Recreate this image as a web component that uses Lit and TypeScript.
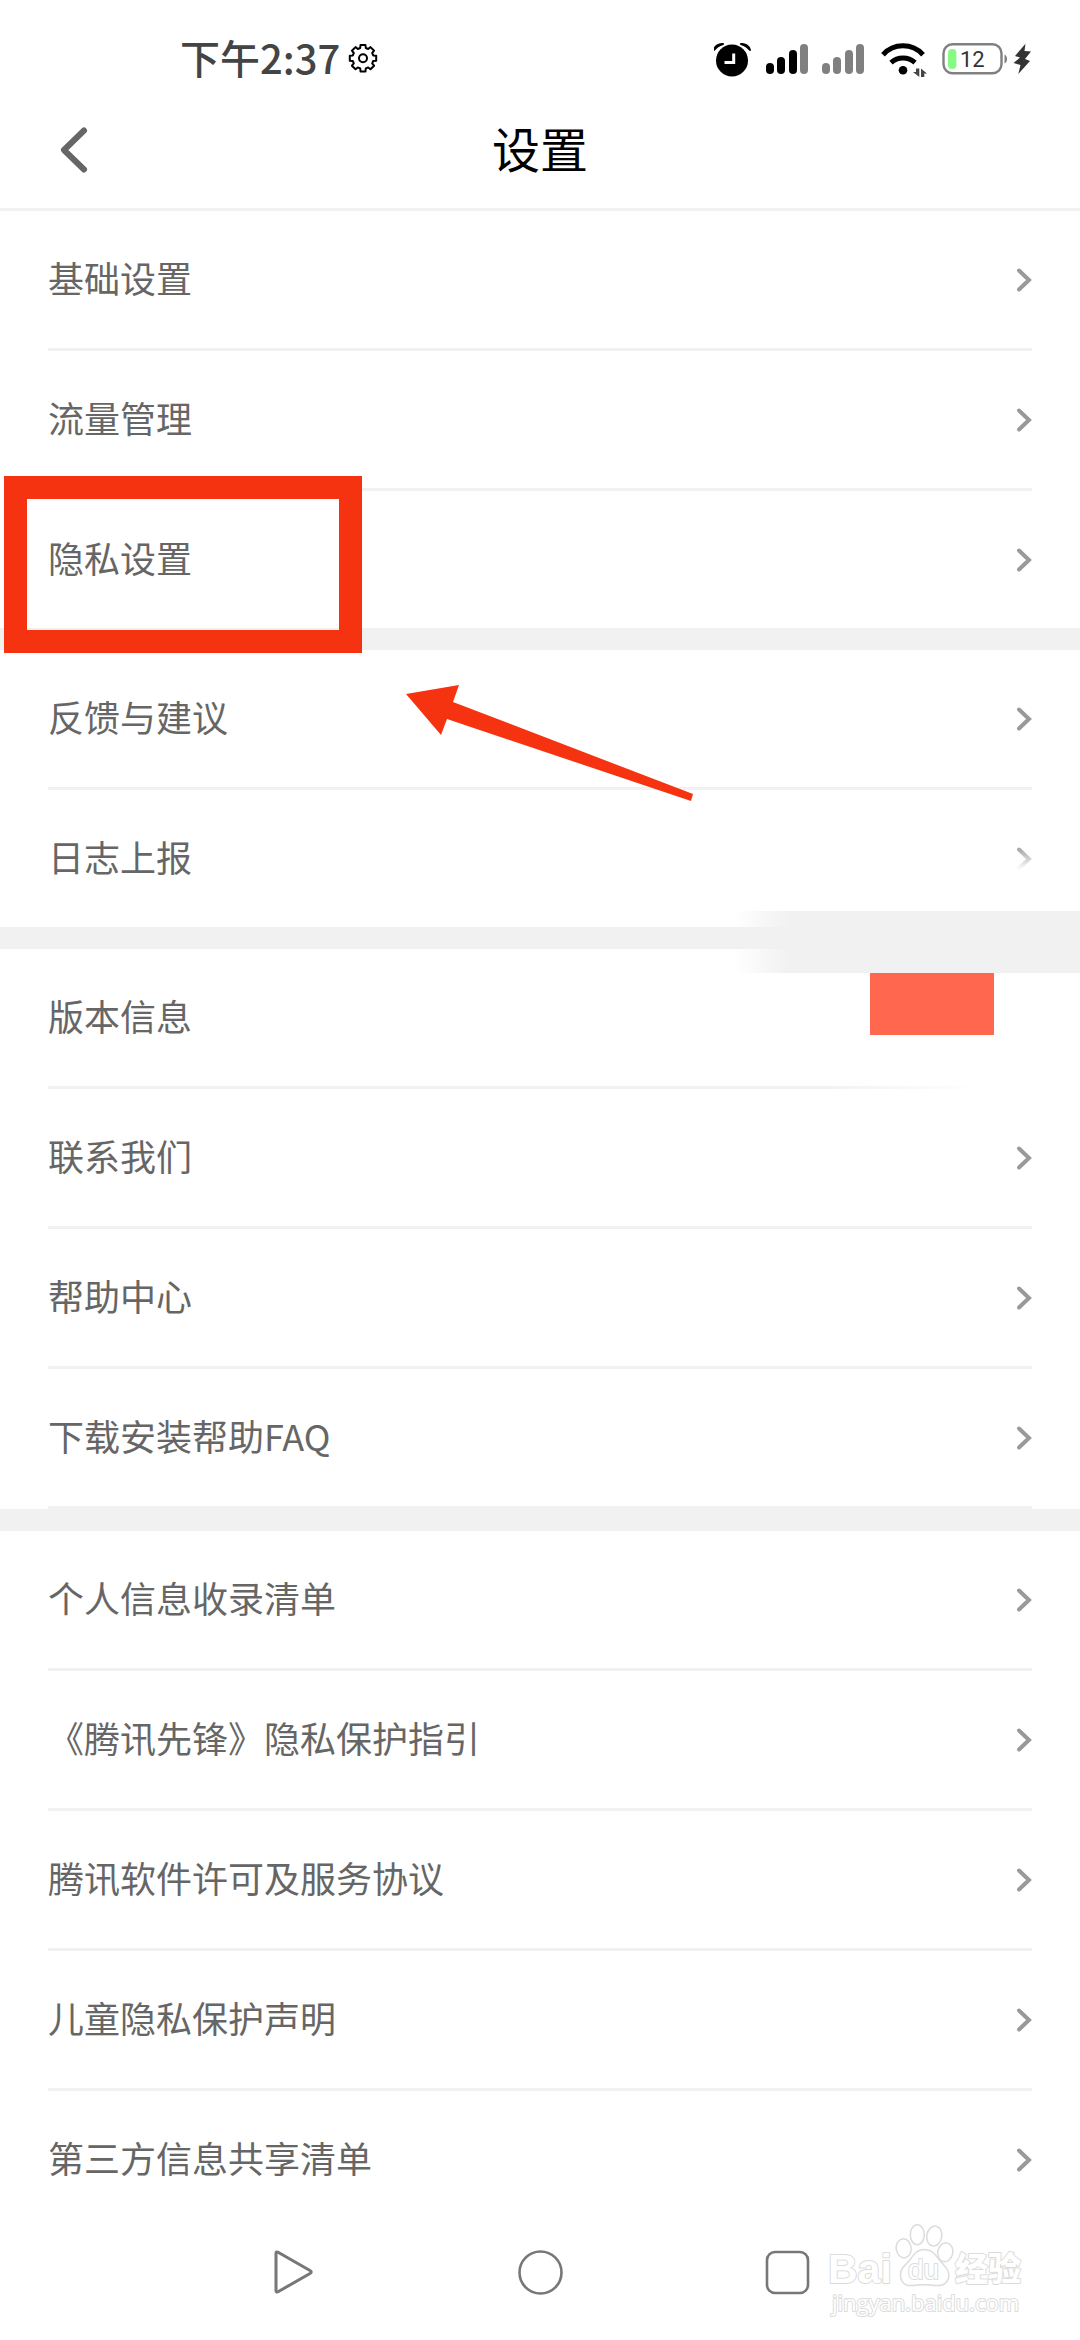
import { LitElement, html, svg, css, nothing } from "lit";
import { customElement, property } from "lit/decorators.js";

interface Item {
  label: string;
  chevron?: "none" | "faded";
  badge?: boolean;
  marked?: boolean;
}

interface Group {
  items: Item[];
  closed?: boolean;
}

const GROUPS: Group[] = [
  { items: [{ label: "基础设置" }, { label: "流量管理" }, { label: "隐私设置", marked: true }] },
  { items: [{ label: "反馈与建议" }, { label: "日志上报", chevron: "faded" }] },
  {
    items: [
      { label: "版本信息", chevron: "none", badge: true },
      { label: "联系我们" },
      { label: "帮助中心" },
      { label: "下载安装帮助FAQ" },
    ],
    closed: true,
  },
  {
    items: [
      { label: "个人信息收录清单" },
      { label: "《腾讯先锋》隐私保护指引" },
      { label: "腾讯软件许可及服务协议" },
      { label: "儿童隐私保护声明" },
      { label: "第三方信息共享清单" },
    ],
  },
];

/** Outline of a cog with eight rounded teeth. */
function gearPath(cx: number, cy: number, outer: number, inner: number): string {
  const pts: string[] = [];
  for (let i = 0; i < 8; i++) {
    const a = (i * Math.PI) / 4 - Math.PI / 2;
    for (const [d, r] of [[-0.27, inner], [-0.19, outer], [0.19, outer], [0.27, inner]]) {
      pts.push(`${(cx + r * Math.cos(a + d)).toFixed(1)} ${(cy + r * Math.sin(a + d)).toFixed(1)}`);
    }
  }
  return `M${pts.join("L")}Z`;
}

@customElement("status-bar")
export class StatusBar extends LitElement {
  static styles = css`
    :host {
      display: flex;
      justify-content: space-between;
      align-items: center;
      padding: 35px 48px 9px 180px;
      line-height: 44px;
    }
    .side,
    .power {
      display: flex;
      align-items: center;
    }
    .side {
      gap: 8px;
    }
    .icons {
      gap: 14px;
    }
    .power {
      gap: 6px;
    }
    .time {
      padding-bottom: 4px;
      font-size: 40px;
      font-weight: 500;
      color: #444;
    }
    svg {
      display: block;
    }
    .level {
      font-family: Roboto, "Noto Sans", sans-serif;
      font-size: 22px;
      fill: #333;
    }
  `;

  private signal(active: number) {
    const bars = [
      [0, 24],
      [11, 18],
      [23, 11],
      [34, 5],
    ];
    return html`<svg width="42" height="40" viewBox="0 0 42 40" aria-hidden="true">
      ${bars.map(
        ([x, y], i) =>
          svg`<rect x=${x} y=${y} width="8" height=${35 - y} rx="4" fill=${i < active ? "#000" : "#808080"} />`
      )}
    </svg>`;
  }

  render() {
    return html`
      <div class="side">
        <span class="time">下午2:37</span>
        <svg width="30" height="30" viewBox="0 0 30 30" fill="none" stroke="#000" stroke-width="2" stroke-linejoin="round" aria-hidden="true">
          <path d=${gearPath(15, 14.2, 13.4, 10.6)} />
          <circle cx="15" cy="14.200" r="4" />
        </svg>
      </div>
      <div class="side icons">
        <svg width="38" height="40" viewBox="0 0 38 40" aria-hidden="true">
          <path d="M0 11A8 8 0 0 1 9 5Q3 7 0 11ZM36 11A8 8 0 0 0 27 5Q33 7 36 11Z" stroke="#000" stroke-width="2" stroke-linejoin="round" />
          <circle cx="18" cy="21.500" r="16" />
          <path d="M19.700 14.500V23.500H10.500" fill="none" stroke="#fff" stroke-width="3" />
        </svg>
        ${this.signal(3)} ${this.signal(0)}
        <svg width="50" height="40" viewBox="-1 0 50 40" aria-hidden="true">
          <g fill="none" stroke="#000" stroke-width="5">
            <path d="M4 15.700A27 27 0 0 1 44 15.700" />
            <path d="M12 23.700A18 18 0 0 1 36 23.700" />
          </g>
          <circle cx="24" cy="31.300" r="4.300" />
          <g fill="#444">
            <path d="M37 29.500H40.300V38L34 33H37Z" />
            <path d="M42 38H45.300V34.500H48L42 29.500Z" />
          </g>
        </svg>
        <div class="power">
          <svg width="65" height="40" viewBox="0 0 65 40" aria-hidden="true">
            <rect x="1.500" y="5.300" width="58" height="29" rx="9" fill="none" stroke="#808080" stroke-width="2.400" />
            <path d="M62.500 15.500Q65 16.500 65 20T62.500 24.500Z" fill="#808080" />
            <rect x="6" y="10" width="8.400" height="20" rx="4" fill="#85fb85" />
            <text class="level" x="18" y="28">12</text>
          </svg>
          <svg width="19" height="40" viewBox="0 0 19 40" aria-hidden="true">
            <path d="M12.500 4.700L2 17L7 18.500L0.500 24L7.500 26L5.300 35L17 22L12 20L18 12.500L11.500 12Z" fill="#333" />
          </svg>
        </div>
      </div>
    `;
  }
}

@customElement("setting-row")
export class SettingRow extends LitElement {
  @property() label = "";
  @property() chevron = "";
  @property({ type: Boolean }) badge = false;
  @property({ type: Boolean }) marked = false;
  @property({ type: Boolean, reflect: true }) last = false;

  static styles = css`
    :host {
      display: block;
      position: relative;
      padding: 0 48px;
    }
    .row {
      display: flex;
      align-items: center;
      justify-content: space-between;
      width: 100%;
      padding: 42px 0;
      border: 0;
      background: none;
      font: inherit;
      font-size: 36px;
      line-height: 49px;
      color: #666;
      text-align: left;
    }
    .label {
      padding-bottom: 4px;
    }
    .line {
      height: 3px;
      background: #f1f1f1;
    }
    .line.fading {
      background: linear-gradient(to right, #f1f1f1 78%, #fff 95%);
    }
    :host([last]) .line {
      display: none;
    }
    svg {
      display: block;
    }
    .badge {
      position: absolute;
      top: 24px;
      right: 86px;
      width: 124px;
      height: 62px;
      background: #ff674f;
    }
    .mark {
      position: absolute;
      top: -15px;
      left: 4px;
      box-sizing: border-box;
      width: 358px;
      height: 177px;
      border: 23px solid #f53311;
      z-index: 2;
      pointer-events: none;
    }
  `;

  render() {
    const faded = this.chevron === "faded";
    return html`
      <button class="row" type="button">
        <span class="label">${this.label}</span>
        ${this.chevron === "none"
          ? nothing
          : html`<svg width="16" height="26" viewBox="0 0 16 26" aria-hidden="true">
              <defs>
                <linearGradient id="fade" x1="0" y1="0" x2="0" y2="1">
                  <stop offset="0" stop-color="#aaa" />
                  <stop offset="1" stop-color="#fafafa" />
                </linearGradient>
              </defs>
              <path
                d="M3 3.500L13 13L3 22.500"
                fill="none"
                stroke=${faded ? "url(#fade)" : "#999"}
                stroke-width="4"
                stroke-linecap="round"
              />
            </svg>`}
      </button>
      <div class="line ${this.badge ? "fading" : ""}"></div>
      ${this.badge ? html`<div class="badge"></div>` : nothing}
      ${this.marked ? html`<div class="mark"></div>` : nothing}
    `;
  }
}

@customElement("system-nav")
export class SystemNav extends LitElement {
  static styles = css`
    :host {
      display: flex;
      justify-content: space-between;
      position: relative;
      padding: 22px 25% 45px;
    }
    button {
      display: block;
      padding: 0;
      border: 0;
      background: none;
    }
    svg {
      display: block;
    }
    .brand {
      position: absolute;
      right: 54px;
      bottom: 20px;
    }
    .outlined {
      fill: #fff;
      stroke: #dcdcdc;
      stroke-width: 2px;
      paint-order: stroke;
      stroke-linejoin: round;
    }
    .latin {
      font-family: "Liberation Sans", sans-serif;
      font-weight: 700;
      font-size: 41px;
    }
    .small {
      font-family: "Liberation Sans", sans-serif;
      font-size: 28px;
      fill: #fff;
    }
    .han {
      font-family: "Noto Sans CJK SC", sans-serif;
      font-weight: 900;
      font-size: 33px;
    }
    .site {
      font-family: "Open Sans", sans-serif;
      font-size: 22px;
    }
  `;

  render() {
    return html`
      <button type="button" aria-label="返回">
        <svg width="45" height="45" viewBox="0 0 45 45" fill="none" stroke="#777" stroke-width="3" stroke-linejoin="round">
          <path d="M6 3.500Q6 1 8.500 2.500L40 20.500Q42.500 22 40 23.500L8.500 41.500Q6 43 6 40.500Z" />
        </svg>
      </button>
      <button type="button" aria-label="主屏幕">
        <svg width="45" height="45" viewBox="0 0 45 45" fill="none" stroke="#777" stroke-width="2.600">
          <circle cx="22.500" cy="22.500" r="21" />
        </svg>
      </button>
      <button type="button" aria-label="最近任务">
        <svg width="45" height="45" viewBox="0 0 45 45" fill="none" stroke="#777" stroke-width="2.600">
          <rect x="2" y="2" width="41" height="41" rx="8" />
        </svg>
      </button>
      <svg class="brand" width="198" height="100" viewBox="0 0 198 100">
        <text class="outlined latin" x="0" y="63">Bai</text>
        <g fill="#fff" stroke="#dcdcdc" stroke-width="1.500">
          <ellipse cx="75.700" cy="28.300" rx="7.500" ry="9.500" transform="rotate(-8 75.700 28.300)" />
          <ellipse cx="89.300" cy="14.700" rx="7" ry="10" />
          <ellipse cx="106.300" cy="16" rx="7.500" ry="10" transform="rotate(10 106.300 16)" />
          <ellipse cx="117.300" cy="32.300" rx="7.500" ry="9.500" transform="rotate(12 117.300 32.300)" />
          <path d="M96.500 29.500C105 29.500 108 36 113 42C119 48 122 52 120.500 58C118 67 110 66 103 65C98 64.500 94 64.500 89 65C81 66.500 73 66 72.500 55C72 48 78 45 82 40C86 34 89 29.500 96.500 29.500Z" />
        </g>
        <text class="outlined small" x="80" y="59">du</text>
        <text class="outlined han" x="127" y="61">经验</text>
        <text class="outlined site" x="4" y="91">jingyan.baidu.com</text>
      </svg>
    `;
  }
}

@customElement("app-root")
export class AppRoot extends LitElement {
  static styles = css`
    :host {
      display: block;
      background: #fff;
      font-family: "Noto Sans CJK SC", "Noto Sans", sans-serif;
    }
    .bar {
      display: grid;
      grid-template-columns: 1fr auto 1fr;
      align-items: center;
      padding: 22px 48px;
      border-bottom: 3px solid #f1f1f1;
    }
    .title {
      margin: 0;
      padding-bottom: 6px;
      font-size: 48px;
      font-weight: 400;
      line-height: 66px;
      color: #000;
    }
    .back {
      justify-self: start;
      padding: 10px;
      border: 0;
      background: none;
    }
    .back svg,
    .pointer {
      display: block;
    }
    .group {
      position: relative;
    }
    .group + .group {
      border-top: 22px solid #f1f1f1;
    }
    .smear {
      position: absolute;
      right: 0;
      top: -38px;
      width: 32%;
      height: 62px;
      background: linear-gradient(to right, rgba(241, 241, 241, 0), #f1f1f1 16%);
    }
    .pointer {
      position: absolute;
      left: 400px;
      top: 30px;
      z-index: 2;
      pointer-events: none;
    }
  `;

  render() {
    return html`
      <status-bar></status-bar>
      <header class="bar">
        <button class="back" type="button" aria-label="返回">
          <svg width="32" height="48" viewBox="0 0 32 48" fill="none" stroke="#666" stroke-width="6" stroke-linecap="round" stroke-linejoin="round">
            <path d="M26 4.500L6 24L26 43.500" />
          </svg>
        </button>
        <h1 class="title">设置</h1>
      </header>
      <main>
        ${GROUPS.map(
          (group, g) => html`<section class="group">
            ${group.items.map(
              (item, i) => html`<setting-row
                .label=${item.label}
                .chevron=${item.chevron ?? ""}
                .badge=${!!item.badge}
                .marked=${!!item.marked}
                .last=${i === group.items.length - 1 && !group.closed}
              ></setting-row>`
            )}
            ${g === 1
              ? html`<svg class="pointer" width="300" height="130" viewBox="400 680 300 130" aria-hidden="true">
                  <path d="M406 694L459 685L453 702L693 794L691 801L447 719L441 735Z" fill="#f53311" />
                </svg>`
              : nothing}
            ${g === 2 ? html`<div class="smear"></div>` : nothing}
          </section>`
        )}
      </main>
      <system-nav></system-nav>
    `;
  }
}
